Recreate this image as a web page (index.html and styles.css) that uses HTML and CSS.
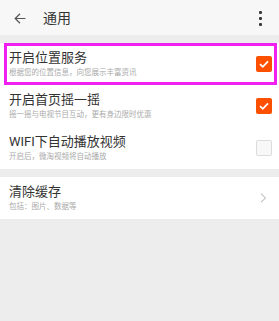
FILE: index.html
```html
<!DOCTYPE html>
<html lang="zh-CN">
<head>
<meta charset="utf-8">
<title>通用</title>
<link rel="stylesheet" href="styles.css">
</head>
<body>
<header class="topbar">
  <svg class="back" width="12" height="11" viewBox="0 0 12 11"><path d="M11.5 5.5H1.2M6 0.8L1.2 5.5L6 10.2" fill="none" stroke="#555" stroke-width="1.2"/></svg>
  <span class="title">通用</span>
  <span class="kebab"><i></i><i></i><i></i></span>
</header>
<section class="group">
  <div class="row highlight">
    <div class="text">
      <div class="name">开启位置服务</div>
      <div class="desc">根据您的位置信息，向您展示丰富资讯</div>
    </div>
    <span class="check on"><svg width="16" height="16" viewBox="0 0 16 16"><path d="M4 8.2L6.8 10.8L12 5.4" fill="none" stroke="#fff" stroke-width="1.8"/></svg></span>
  </div>
  <div class="row">
    <div class="text">
      <div class="name">开启首页摇一摇</div>
      <div class="desc">摇一摇与电视节目互动，更有身边限时优惠</div>
    </div>
    <span class="check on"><svg width="16" height="16" viewBox="0 0 16 16"><path d="M4 8.2L6.8 10.8L12 5.4" fill="none" stroke="#fff" stroke-width="1.8"/></svg></span>
  </div>
  <div class="row">
    <div class="text">
      <div class="name">WIFI下自动播放视频</div>
      <div class="desc">开启后，微淘视频将自动播放</div>
    </div>
    <span class="check"></span>
  </div>
</section>
<section class="group">
  <div class="row">
    <div class="text">
      <div class="name">清除缓存</div>
      <div class="desc">包括：图片、数据等</div>
    </div>
    <svg class="chev" width="7" height="10" viewBox="0 0 7 10"><path d="M1 0.8L5.6 5L1 9.2" fill="none" stroke="#aaa" stroke-width="1"/></svg>
  </div>
</section>
</body>
</html>
```
FILE: styles.css
```css
html, body {
  margin: 0;
  padding: 0;
}
body {
  background: #ededed;
  font-family: Roboto, "Noto Sans CJK SC", sans-serif;
  color: #333;
  height: 321px;
}
.topbar {
  height: 35px;
  background: #f7f7f7;
  display: flex;
  align-items: center;
  padding: 0 17px 0 14px;
  box-sizing: border-box;
}
.back {
  display: block;
  margin-top: 1px;
}
.title {
  margin-left: 17px;
  font-size: 14px;
  line-height: 16px;
  color: #333;
  flex: 1;
}
.kebab {
  display: flex;
  flex-direction: column;
  gap: 3px;
  margin-top: 2px;
}
.kebab i {
  display: block;
  width: 3px;
  height: 3px;
  border-radius: 1px;
  background: #3a3a3a;
}
.group {
  background: #fff;
  margin-top: 8px;
}
.row {
  position: relative;
  height: 42px;
  display: flex;
  align-items: center;
  padding: 0 7px 0 9px;
  box-sizing: border-box;
}
.text {
  flex: 1;
  display: flex;
  flex-direction: column;
  gap: 3px;
}
.name {
  font-size: 13px;
  line-height: 15px;
  color: #333;
}
.desc {
  font-size: 7.5px;
  line-height: 10px;
  color: #aaa;
}
.highlight::after {
  content: "";
  position: absolute;
  left: 4px;
  right: 2px;
  top: 0;
  bottom: 0;
  border: 3px solid #f020f0;
  pointer-events: none;
}
.check {
  width: 16px;
  height: 16px;
  border-radius: 2px;
  box-sizing: border-box;
  border: 1px solid #dcdcdc;
  background: #f8f8f8;
  display: block;
}
.check.on {
  border: none;
  background: #ff5000;
}
.check svg {
  display: block;
}
.chev {
  display: block;
  margin-right: 5px;
}
```
